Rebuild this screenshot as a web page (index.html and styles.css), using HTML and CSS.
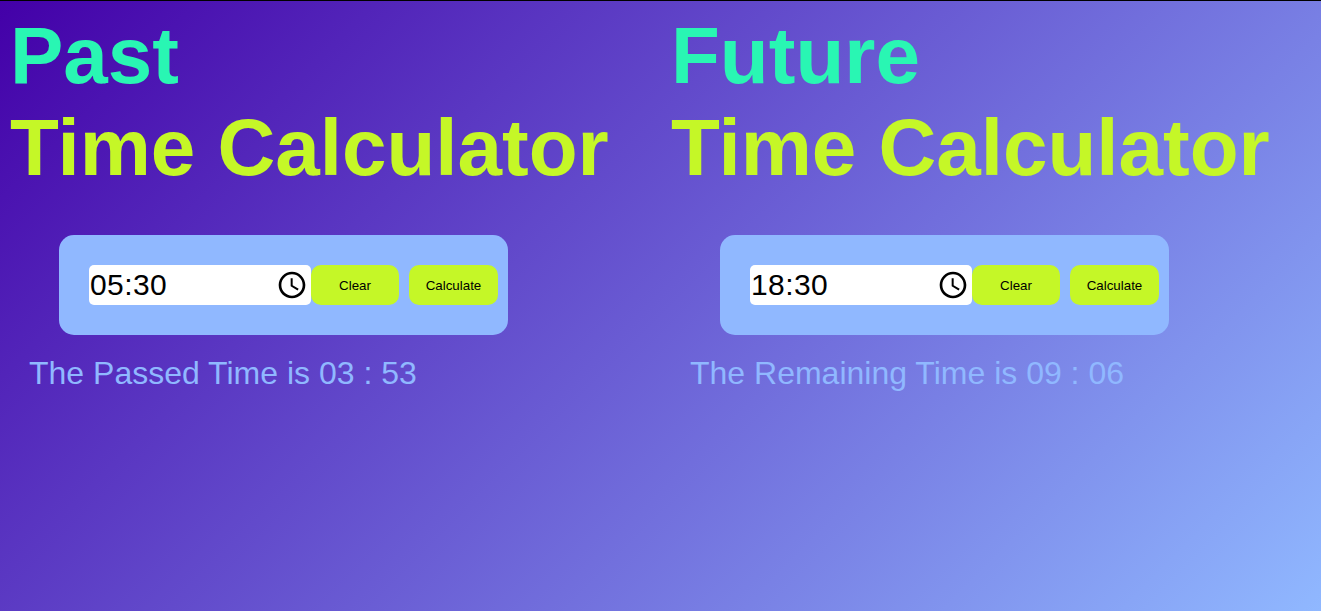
FILE: index.html
```html
<!DOCTYPE html>
<html lang="en">
<head>
<meta charset="utf-8">
<title>Time Calculator</title>
<link rel="stylesheet" href="styles.css">
</head>
<body>
<main class="page">
  <section class="calculator">
    <h1 class="title"><span class="accent">Past</span><br>Time Calculator</h1>
    <div class="panel">
      <div class="time-field"><span>05:30</span>
        <svg class="clock" viewBox="0 0 24 24"><path d="M12 2C6.500 2 2 6.500 2 12s4.500 10 10 10 10-4.500 10-10S17.500 2 12 2zm0 18c-4.400 0-8-3.600-8-8s3.600-8 8-8 8 3.600 8 8-3.600 8-8 8zm.5-13H11v6l5.200 3.200.8-1.300-4.500-2.700V7z"/></svg>
      </div>
      <button class="button clear">Clear</button>
      <button class="button calculate">Calculate</button>
    </div>
    <p class="result">The Passed Time is 03 : 53</p>
  </section>
  <section class="calculator">
    <h1 class="title"><span class="accent">Future</span><br>Time Calculator</h1>
    <div class="panel">
      <div class="time-field"><span>18:30</span>
        <svg class="clock" viewBox="0 0 24 24"><path d="M12 2C6.500 2 2 6.500 2 12s4.500 10 10 10 10-4.500 10-10S17.500 2 12 2zm0 18c-4.400 0-8-3.600-8-8s3.600-8 8-8 8 3.600 8 8-3.600 8-8 8zm.5-13H11v6l5.200 3.200.8-1.300-4.500-2.700V7z"/></svg>
      </div>
      <button class="button clear">Clear</button>
      <button class="button calculate">Calculate</button>
    </div>
    <p class="result">The Remaining Time is 09 : 06</p>
  </section>
</main>
</body>
</html>
```
FILE: styles.css
```css
* { box-sizing: border-box; }
body { margin: 0; font-family: "Liberation Sans", Arial, sans-serif; }
.page {
  display: grid;
  grid-template-columns: 661px 1fr;
  height: 611px;
  border-top: 1px solid #000;
  background: linear-gradient(135deg, #4300a8, #90b8ff);
}
.calculator { padding: 9px 10px 0; }
.title { margin: 0; font-size: 80px; line-height: 92px; color: #c5f727; white-space: nowrap; }
.accent { color: #29f6b3; }
.panel {
  display: flex;
  width: 449px;
  height: 100px;
  margin: 41px 0 0 49px;
  padding: 30px 10px 30px 30px;
  border-radius: 15px;
  background: #90b8ff;
}
.time-field {
  display: flex;
  align-items: center;
  justify-content: space-between;
  width: 222px;
  height: 40px;
  padding: 0 3px 0 1px;
  border-radius: 5px;
  background: #fff;
  font-size: 30px;
  letter-spacing: 0.4px;
  color: #000;
}
.clock { width: 32px; height: 32px; }
.button {
  height: 40px;
  padding: 0;
  border: 0;
  border-radius: 10px;
  background: #c5f727;
  font: 13.333px "Liberation Sans", Arial, sans-serif;
  color: #000;
}
.clear { width: 88px; margin-right: 10px; }
.calculate { width: 89px; }
.result { margin: 20px 0 0 19px; font-size: 32px; line-height: 37px; color: #90b8ff; }
```
